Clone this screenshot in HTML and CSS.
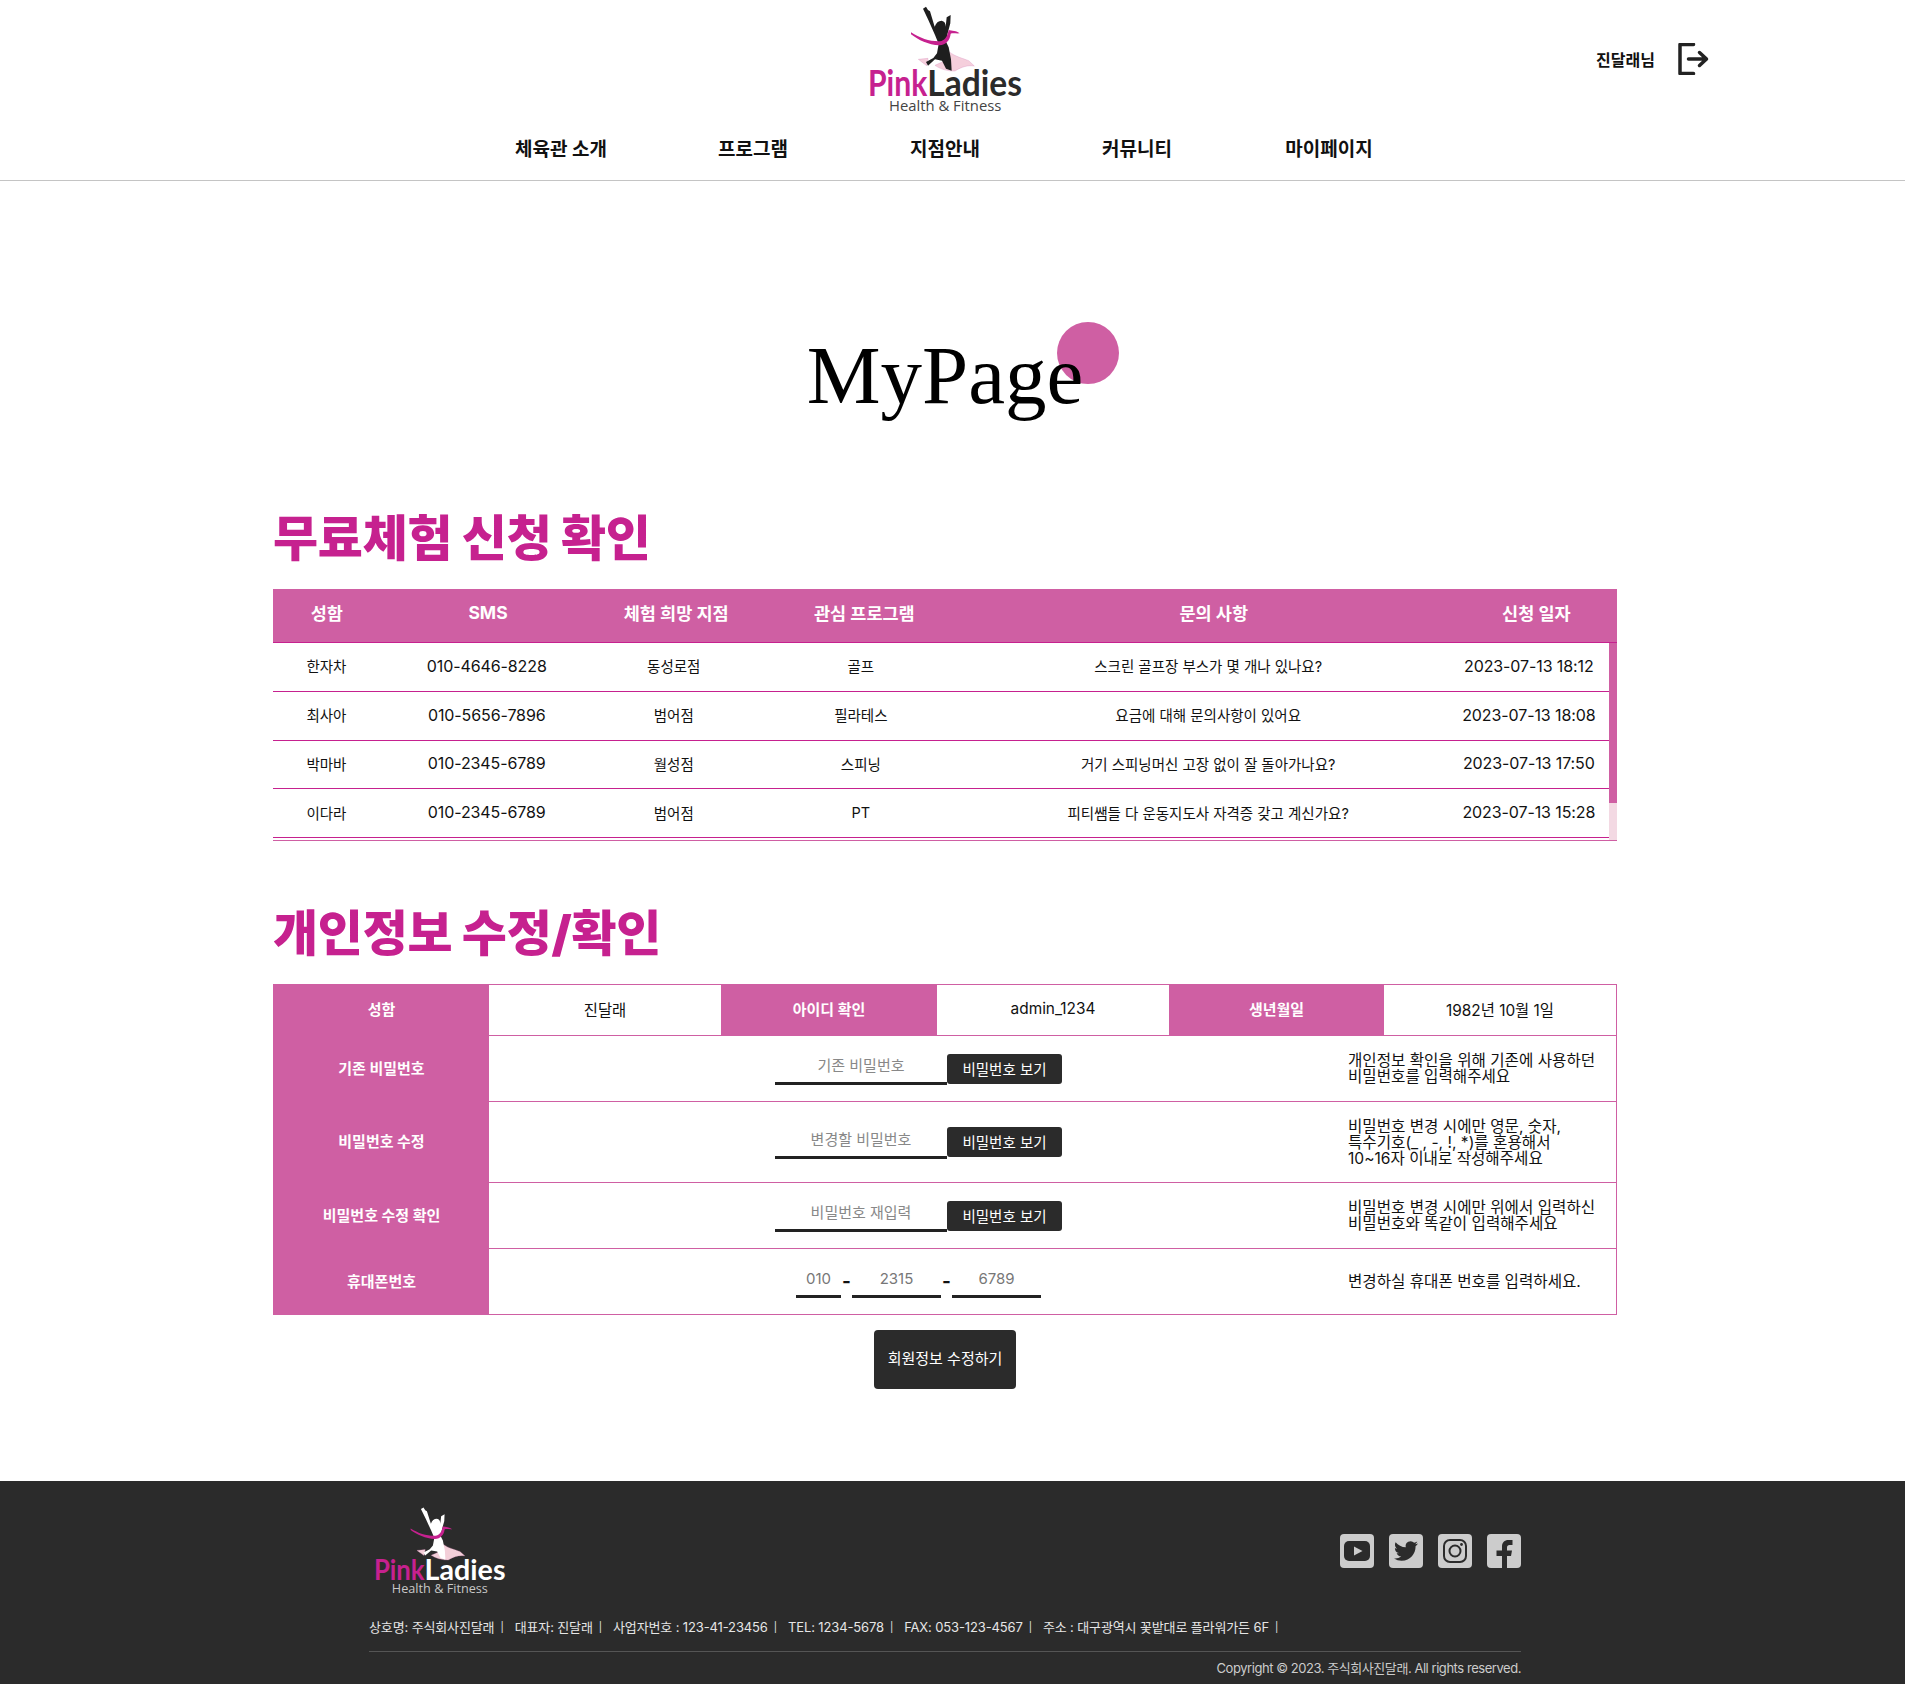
FILE: index.html
```html
<!DOCTYPE html>
<html lang="ko">
<head>
<meta charset="utf-8">
<title>MyPage</title>
<link rel="stylesheet" href="styles.css">
</head>
<body>
<header class="site-header">
  <div class="top-row">
    <div></div>
    <a class="logo" href="#">
      <svg class="logo-svg" viewBox="0 0 660 375" width="220" height="125">
        <path class="swoosh" d="M235 178 L264 175 L260 197 Z"/>
        <path class="swoosh" d="M328 156 C345 170 372 176 386 182 L403 198 C385 195 365 200 345 213 C325 214 302 208 285 196 L320 180 Z"/>
        <path class="figure" d="M249 26 L258 20 L264 30 L270 34 L284 80 Q290 62 305 62 Q317 64 317 80 L320 52 L332 45 L331 70 L323 100 L318 125 L326 142 L333 178 L335 212 L318 206 L306 182 L285 178 L264 197 L258 186 L280 174 L291 160 L296 132 L285 105 L265 60 Z"/>
        <path class="ribbon" d="M213 97 C240 115 270 125 300 124 C312 122 322 112 326 90 C335 92 350 92 359 100 C348 101 338 98 332 101 C330 120 318 135 298 136 C265 135 235 120 213 103 Z"/>
        <text class="logo-pink" x="84" y="288" textLength="178" lengthAdjust="spacingAndGlyphs">Pink</text>
        <text class="logo-ladies" x="262" y="288" textLength="284" lengthAdjust="spacingAndGlyphs">Ladies</text>
        <text class="logo-sub" x="147" y="333" textLength="337" lengthAdjust="spacingAndGlyphs">Health &amp; Fitness</text>
      </svg>
    </a>
    <div class="user">
      <span class="user-name">진달래님</span>
      <svg class="logout" viewBox="0 0 32 32" width="32" height="32">
        <path d="M16.5 1.5 H3 V30.5 H16.5"/>
        <path d="M11.5 16 H29 M22.5 9.5 L29.5 16 L22.5 22.5"/>
      </svg>
    </div>
  </div>
  <nav class="nav">
    <a href="#">체육관 소개</a>
    <a href="#">프로그램</a>
    <a href="#">지점안내</a>
    <a href="#">커뮤니티</a>
    <a href="#">마이페이지</a>
  </nav>
</header>

<main class="page">
  <div class="title-wrap">
    <h1 class="title"><span class="dot"></span><span class="title-text">MyPage</span></h1>
  </div>

  <section class="section first">
    <h2 class="section-title">무료체험 신청 확인</h2>
    <div class="trial">
      <table class="trial-table head">
        <colgroup><col class="c1"><col class="c2"><col class="c3"><col class="c4"><col class="c5"><col class="c6"></colgroup>
        <thead><tr><th>성함</th><th>SMS</th><th>체험 희망 지점</th><th>관심 프로그램</th><th>문의 사항</th><th>신청 일자</th></tr></thead>
      </table>
      <div class="trial-scroll">
        <div class="trial-view">
          <table class="trial-table body">
            <colgroup><col class="c1"><col class="c2"><col class="c3"><col class="c4"><col class="c5"><col class="c6"></colgroup>
            <tbody>
              <tr><td>한자차</td><td class="num">010-4646-8228</td><td>동성로점</td><td>골프</td><td>스크린 골프장 부스가 몇 개나 있나요?</td><td class="num">2023-07-13 18:12</td></tr>
              <tr><td>최사아</td><td class="num">010-5656-7896</td><td>범어점</td><td>필라테스</td><td>요금에 대해 문의사항이 있어요</td><td class="num">2023-07-13 18:08</td></tr>
              <tr><td>박마바</td><td class="num">010-2345-6789</td><td>월성점</td><td>스피닝</td><td>거기 스피닝머신 고장 없이 잘 돌아가나요?</td><td class="num">2023-07-13 17:50</td></tr>
              <tr><td>이다라</td><td class="num">010-2345-6789</td><td>범어점</td><td>PT</td><td>피티쌤들 다 운동지도사 자격증 갖고 계신가요?</td><td class="num">2023-07-13 15:28</td></tr>
            </tbody>
          </table>
        </div>
        <div class="scroll-track"><div class="scroll-thumb"></div></div>
      </div>
    </div>
  </section>

  <section class="section second">
    <h2 class="section-title">개인정보 수정/확인</h2>
    <form class="info">
      <div class="info-row summary">
        <div class="label w1">성함</div>
        <div class="val w2">진달래</div>
        <div class="label w3">아이디 확인</div>
        <div class="val w4">admin_1234</div>
        <div class="label w5">생년월일</div>
        <div class="val w6">1982년 10월 1일</div>
      </div>
      <div class="info-row">
        <div class="label w1">기존 비밀번호</div>
        <div class="control">
          <input class="field pw" type="password" placeholder="기존 비밀번호">
          <button class="show-btn" type="button">비밀번호 보기</button>
        </div>
        <p class="note">개인정보 확인을 위해 기존에 사용하던<br>비밀번호를 입력해주세요</p>
      </div>
      <div class="info-row">
        <div class="label w1">비밀번호 수정</div>
        <div class="control">
          <input class="field pw" type="password" placeholder="변경할 비밀번호">
          <button class="show-btn" type="button">비밀번호 보기</button>
        </div>
        <p class="note">비밀번호 변경 시에만 영문, 숫자,<br>특수기호(_ , -, !, *)를 혼용해서<br>10~16자 이내로 작성해주세요</p>
      </div>
      <div class="info-row">
        <div class="label w1">비밀번호 수정 확인</div>
        <div class="control">
          <input class="field pw" type="password" placeholder="비밀번호 재입력">
          <button class="show-btn" type="button">비밀번호 보기</button>
        </div>
        <p class="note">비밀번호 변경 시에만 위에서 입력하신<br>비밀번호와 똑같이 입력해주세요</p>
      </div>
      <div class="info-row phone-row">
        <div class="label w1">휴대폰번호</div>
        <div class="control phone">
          <input class="field p1" type="text" value="010">
          <span class="dash">-</span>
          <input class="field p2" type="text" value="2315">
          <span class="dash">-</span>
          <input class="field p2" type="text" value="6789">
        </div>
        <p class="note">변경하실 휴대폰 번호를 입력하세요.</p>
      </div>
    </form>
    <div class="submit-wrap"><button class="submit" type="button">회원정보 수정하기</button></div>
  </section>
</main>

<footer class="footer">
  <div class="footer-inner">
    <div class="footer-top">
      <a class="footer-logo" href="#">
        <svg class="logo-svg dark" viewBox="0 0 660 375" width="188" height="102" preserveAspectRatio="none">
          <path class="swoosh" d="M235 178 L264 175 L260 197 Z"/>
          <path class="swoosh" d="M328 156 C345 170 372 176 386 182 L403 198 C385 195 365 200 345 213 C325 214 302 208 285 196 L320 180 Z"/>
          <path class="figure" d="M249 26 L258 20 L264 30 L270 34 L284 80 Q290 62 305 62 Q317 64 317 80 L320 52 L332 45 L331 70 L323 100 L318 125 L326 142 L333 178 L335 212 L318 206 L306 182 L285 178 L264 197 L258 186 L280 174 L291 160 L296 132 L285 105 L265 60 Z"/>
          <path class="ribbon" d="M213 97 C240 115 270 125 300 124 C312 122 322 112 326 90 C335 92 350 92 359 100 C348 101 338 98 332 101 C330 120 318 135 298 136 C265 135 235 120 213 103 Z"/>
          <text class="logo-pink" x="84" y="288" textLength="178" lengthAdjust="spacingAndGlyphs">Pink</text>
          <text class="logo-ladies" x="262" y="288" textLength="284" lengthAdjust="spacingAndGlyphs">Ladies</text>
          <text class="logo-sub" x="147" y="333" textLength="337" lengthAdjust="spacingAndGlyphs">Health &amp; Fitness</text>
        </svg>
      </a>
      <div class="social">
        <svg viewBox="0 0 34 34" width="34" height="34"><rect class="sq" width="34" height="34" rx="4"/><rect class="ink" x="4" y="7" width="26" height="20" rx="5"/><path class="sq" d="M14 12.5 L22.5 17 L14 21.5 Z"/></svg>
        <svg viewBox="0 0 34 34" width="34" height="34"><rect class="sq" width="34" height="34" rx="4"/><g transform="translate(5 5)"><path class="ink" d="M23.953 4.57a10 10 0 01-2.825.775 4.958 4.958 0 002.163-2.723c-.951.555-2.005.959-3.127 1.184a4.92 4.92 0 00-8.384 4.482C7.69 8.095 4.067 6.13 1.64 3.162a4.822 4.822 0 00-.666 2.475c0 1.71.87 3.213 2.188 4.096a4.904 4.904 0 01-2.228-.616v.06a4.923 4.923 0 003.946 4.827 4.996 4.996 0 01-2.212.085 4.936 4.936 0 004.604 3.417 9.867 9.867 0 01-6.102 2.105c-.39 0-.779-.023-1.17-.067a13.995 13.995 0 007.557 2.209c9.053 0 13.998-7.496 13.998-13.985 0-.21 0-.42-.015-.63A9.935 9.935 0 0024 4.59z"/></g></svg>
        <svg viewBox="0 0 34 34" width="34" height="34"><rect class="sq" width="34" height="34" rx="4"/><rect class="ink-line" x="6" y="6" width="22" height="22" rx="6"/><circle class="ink-line" cx="17" cy="17" r="5.5"/><circle class="ink" cx="23.5" cy="10.5" r="1.4"/></svg>
        <svg viewBox="0 0 34 34" width="34" height="34"><rect class="sq" width="34" height="34" rx="4"/><path class="ink" d="M15 34 V22 H9.5 V16.5 H15 V12.5 C15 8.5 17.5 6 21.5 6 H25.5 V11 H22.5 C20.8 11 20 12 20 13.5 V16.5 H25 L24 22 H20 V34 Z"/></svg>
      </div>
    </div>
    <p class="biz">
      <span>상호명: 주식회사진달래</span><span>대표자: 진달래</span><span>사업자번호 : 123-41-23456</span><span>TEL: 1234-5678</span><span>FAX: 053-123-4567</span><span>주소 : 대구광역시 꽃밭대로 플라워가든 6F</span>
    </p>
    <p class="copy">Copyright © 2023. 주식회사진달래. All rights reserved.</p>
  </div>
</footer>
</body>
</html>
```

FILE: styles.css
```css
* { box-sizing: border-box; }
html, body { margin: 0; padding: 0; }
body {
  font-family: "Inter", "Noto Sans CJK KR", "Noto Sans", sans-serif;
  color: #111;
  background: #fff;
}
a { color: inherit; text-decoration: none; }

/* header */
.site-header { border-bottom: 1px solid #c4c4c4; height: 181px; padding-right: 15px; }
.top-row { display: grid; grid-template-columns: 1fr 220px 1fr; height: 125px; }
.logo { display: block; height: 125px; margin-left: 5px; }
.logo-svg { display: block; }
.figure { fill: #1e1e1e; }
.ribbon { fill: #c6218f; }
.swoosh { fill: #f5cfdc; stroke: #d98abb; stroke-width: 1; }
.logo-pink { font-family: "Lato", sans-serif; font-weight: 700; font-size: 108px; fill: #c6218f; }
.logo-ladies { font-family: "Lato", sans-serif; font-weight: 700; font-size: 108px; fill: #2b2b2b; }
.logo-sub { font-family: "Open Sans", sans-serif; font-size: 44px; fill: #444; }
.logo-svg.dark .figure { fill: #fff; }
.logo-svg.dark .logo-ladies { fill: #fff; }
.logo-svg.dark .logo-sub { fill: #c8c8c8; }
.logo-svg.dark .swoosh { fill: #f3cfd9; }

.user { display: flex; justify-content: flex-end; align-items: center; gap: 22px; padding-right: 181px; height: 118px; }
.user-name { font-size: 16px; font-weight: 700; }
.logout { fill: none; stroke: #222; stroke-width: 3.5; stroke-linejoin: round; stroke-linecap: round; }

.nav { display: flex; justify-content: center; height: 55px; align-items: flex-start; }
.nav a { width: 192px; text-align: center; font-size: 19px; font-weight: 700; line-height: 49px; }

/* main */
.page { padding-right: 15px; }
.title-wrap { display: flex; justify-content: center; padding-top: 147px; }
.title { position: relative; margin: 0; font-family: "Liberation Serif", serif; font-weight: 400; font-size: 83px; line-height: 94px; color: #000; }
.title-text { position: relative; }
.dot { position: absolute; left: 250px; top: -6px; width: 62px; height: 62px; border-radius: 50%; background: #cf5fa3; }

.section { width: 1344px; margin: 0 auto; }
.section.first { padding-top: 87px; }
.section.second { padding-top: 63px; }
.section-title { margin: 0; font-size: 49px; font-weight: 900; line-height: 60px; color: #c6218f; letter-spacing: -0.25px; }

.trial { margin-top: 20px; border-bottom: 1px solid #cf5fa3; }
.trial-table { width: 100%; border-collapse: collapse; table-layout: fixed; }
.c1 { width: 8%; } .c2 { width: 16%; } .c3 { width: 12%; } .c4 { width: 16%; } .c5 { width: 36%; } .c6 { width: 12%; }
.trial-table th { background: #cf5fa3; color: #fff; font-size: 17.5px; font-weight: 700; height: 53px; padding: 0 0 5px; border-bottom: 1px solid #c6218f; }
.trial-scroll { display: flex; height: 197px; }
.trial-view { flex: 1; min-width: 0; overflow: hidden; }
.scroll-track { width: 8px; flex: none; background: #f3d9e3; }
.scroll-thumb { height: 160px; background: #cf5fa3; }
.trial-table td { height: 48.75px; padding: 0 0 2px; text-align: center; font-size: 14.5px; color: #111; border-bottom: 1px solid #c6218f; }
.trial-table td.num { font-size: 16px; letter-spacing: -0.1px; }

.info { border: 1px solid #cf5fa3; margin-top: 20px; }
.info-row { display: flex; align-items: stretch; border-bottom: 1px solid #cf5fa3; min-height: 66px; }
.info-row:last-child { border-bottom: 0; }
.info-row.summary { height: 51px; min-height: 0; }
.info-row.phone-row { min-height: 65px; }
.label { background: #cf5fa3; color: #fff; font-size: 15px; font-weight: 700; display: flex; align-items: center; justify-content: center; padding-bottom: 2px; }
.val { display: flex; align-items: center; justify-content: center; font-size: 15.4px; padding-bottom: 2px; }
.w1 { width: 215px; flex: none; }
.w2 { width: 232px; }
.w3 { width: 216px; }
.w4 { width: 232px; }
.w5 { width: 215px; }
.w6 { flex: 1; }
.control { flex: 1; display: flex; align-items: center; justify-content: center; }
.field { border: 0; border-bottom: 3px solid #222; outline: 0; background: transparent; text-align: center; font: inherit; font-size: 15px; color: #777; height: 34px; padding: 0 0 2px; }
.field::placeholder { color: #888; opacity: 1; }
.pw { width: 172px; }
.p1 { width: 45px; }
.p2 { width: 89px; }
.dash { width: 11px; text-align: center; font-size: 19px; font-weight: 700; }
.show-btn { width: 115px; height: 30px; border: 0; border-radius: 3px; background: #2b2b2b; color: #fff; font: inherit; font-size: 14.5px; padding: 0 0 1px; margin-top: 1px; }
.note { flex: none; width: 268px; margin: 0; padding: 17px 0 15px; font-size: 15.6px; line-height: 16px; align-self: center; color: #111; }
.submit-wrap { display: flex; justify-content: center; padding-top: 15px; }
.submit { width: 142px; height: 59px; border: 0; border-radius: 4px; background: #2b2b2b; color: #fff; font: inherit; font-size: 15px; padding: 0 0 3px; }

/* footer */
.footer { margin-top: 92px; background: #2b2b2b; height: 203px; padding-right: 15px; color: #ddd; }
.footer-inner { width: 1152px; margin: 0 auto; }
.footer-top { display: flex; justify-content: space-between; align-items: flex-start; height: 134px; padding-top: 26px; }
.footer-logo { display: block; margin-left: -19px; margin-top: -5px; }
.social { display: flex; gap: 15px; padding-top: 27px; }
.social svg { display: block; }
.sq { fill: #ccc; }
.ink { fill: #2b2b2b; }
.ink-line { fill: none; stroke: #2b2b2b; stroke-width: 2; }
.biz { margin: 0; height: 37px; border-bottom: 1px solid #555; font-size: 13px; line-height: 25px; display: flex; white-space: nowrap; color: #e6e6e6; letter-spacing: -0.13px; }
.biz span { display: inline-flex; align-items: center; height: 25px; }
.biz span::after { content: "|"; font-size: 10px; margin: 0 11px 0 6px; }
.copy { margin: 0; text-align: right; font-size: 13px; line-height: 32px; color: #ccc; letter-spacing: -0.45px; }
```
